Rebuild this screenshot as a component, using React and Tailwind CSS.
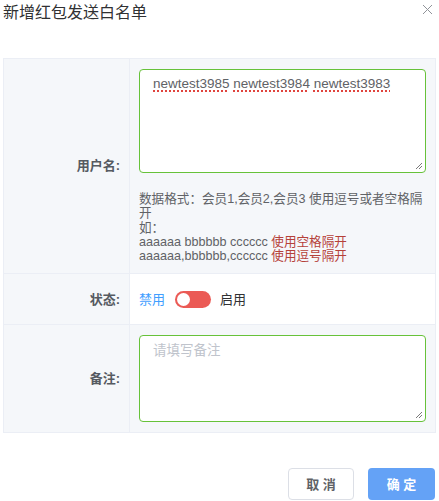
const font = { fontFamily: '"Liberation Sans", "Noto Sans CJK SC", sans-serif' };

const Row = ({ label, gray, children }) => (
  <div className={`flex border-b border-[#ebeef5] ${gray ? "bg-[#f5f7fa]" : "bg-white"}`}>
    <div className="w-[126px] shrink-0 flex items-center justify-end pr-[9px] bg-[#f5f7fa] border-r border-[#ebeef5] text-[13px] font-bold text-[#555a61]">
      {label}
    </div>
    <div className="flex-1 px-[9px] py-[10px]">{children}</div>
  </div>
);

const Grip = () => (
  <svg width="8" height="8" viewBox="0 0 8 8" className="absolute right-[2px] bottom-[2px]">
    <path d="M7 1 L1 7 M7 4 L4 7" stroke="#7a7a7a" strokeWidth="1" />
  </svg>
);

const Word = ({ children }) => (
  <span className="underline decoration-dotted decoration-[#e0443e] decoration-[1.5px] underline-offset-[2px]">
    {children}
  </span>
);

export default function App() {
  return (
    <div className="w-[439px] h-[501px] bg-white relative" style={font}>
      <div className="flex items-center justify-between pl-[3px] pr-[6px] h-[26px]">
        <h2 className="text-[16px] leading-[26px] text-[#303133]">新增红包发送白名单</h2>
        <svg width="11" height="11" viewBox="0 0 11 11" className="-mt-[8px]">
          <path d="M1 1 L10 10 M10 1 L1 10" stroke="#909399" strokeWidth="1" />
        </svg>
      </div>

      <div className="mt-[32px] mx-[3px] w-[433px] border-t border-l border-r border-[#ebeef5]">
        <Row label="用户名:" gray>
          <div className="relative h-[104px] rounded-[4px] border border-[#67c23a] bg-white px-[13px] py-[5px] text-[13.5px] leading-[18px] text-[#606266]">
            <Word>newtest3985</Word> <Word>newtest3984</Word> <Word>newtest3983</Word>
            <Grip />
          </div>
          <div className="mt-[19px] text-[12.6px] leading-[14.3px] text-[#606266]">
            <p>数据格式：会员1,会员2,会员3 使用逗号或者空格隔开</p>
            <p>如：</p>
            <p>
              aaaaaa bbbbbb cccccc <span className="text-[#b5413a]">使用空格隔开</span>
            </p>
            <p>
              aaaaaa,bbbbbb,cccccc <span className="text-[#b5413a]">使用逗号隔开</span>
            </p>
          </div>
        </Row>
        <Row label="状态:">
          <div className="flex items-center h-[30px] text-[13px]">
            <span className="text-[#409eff]">禁用</span>
            <span className="ml-[10px] w-[36px] h-[17px] rounded-full bg-[#eb5a55] relative">
              <span className="absolute left-[2px] top-[2px] w-[13px] h-[13px] rounded-full bg-white" />
            </span>
            <span className="ml-[9px] text-[#303133]">启用</span>
          </div>
        </Row>
        <Row label="备注:" gray>
          <div className="relative h-[87px] rounded-[4px] border border-[#67c23a] bg-white">
            <textarea
              className="block w-full h-full resize-none bg-transparent px-[13px] py-[6px] text-[13.5px] leading-[18px] text-[#606266] outline-none placeholder:text-[#c0c4cc]"
              placeholder="请填写备注"
              style={font}
            />
            <Grip />
          </div>
        </Row>
      </div>

      <div className="flex justify-end gap-[14px] pr-[4px] mt-[35px]">
        <button className="w-[66px] h-[32px] rounded-[4px] border border-[#dcdfe6] bg-white text-[13px] font-bold text-[#606266]">
          取 消
        </button>
        <button className="w-[67px] h-[32px] rounded-[4px] bg-[#64a2f6] text-[13px] font-bold text-white">
          确 定
        </button>
      </div>
    </div>
  );
}
